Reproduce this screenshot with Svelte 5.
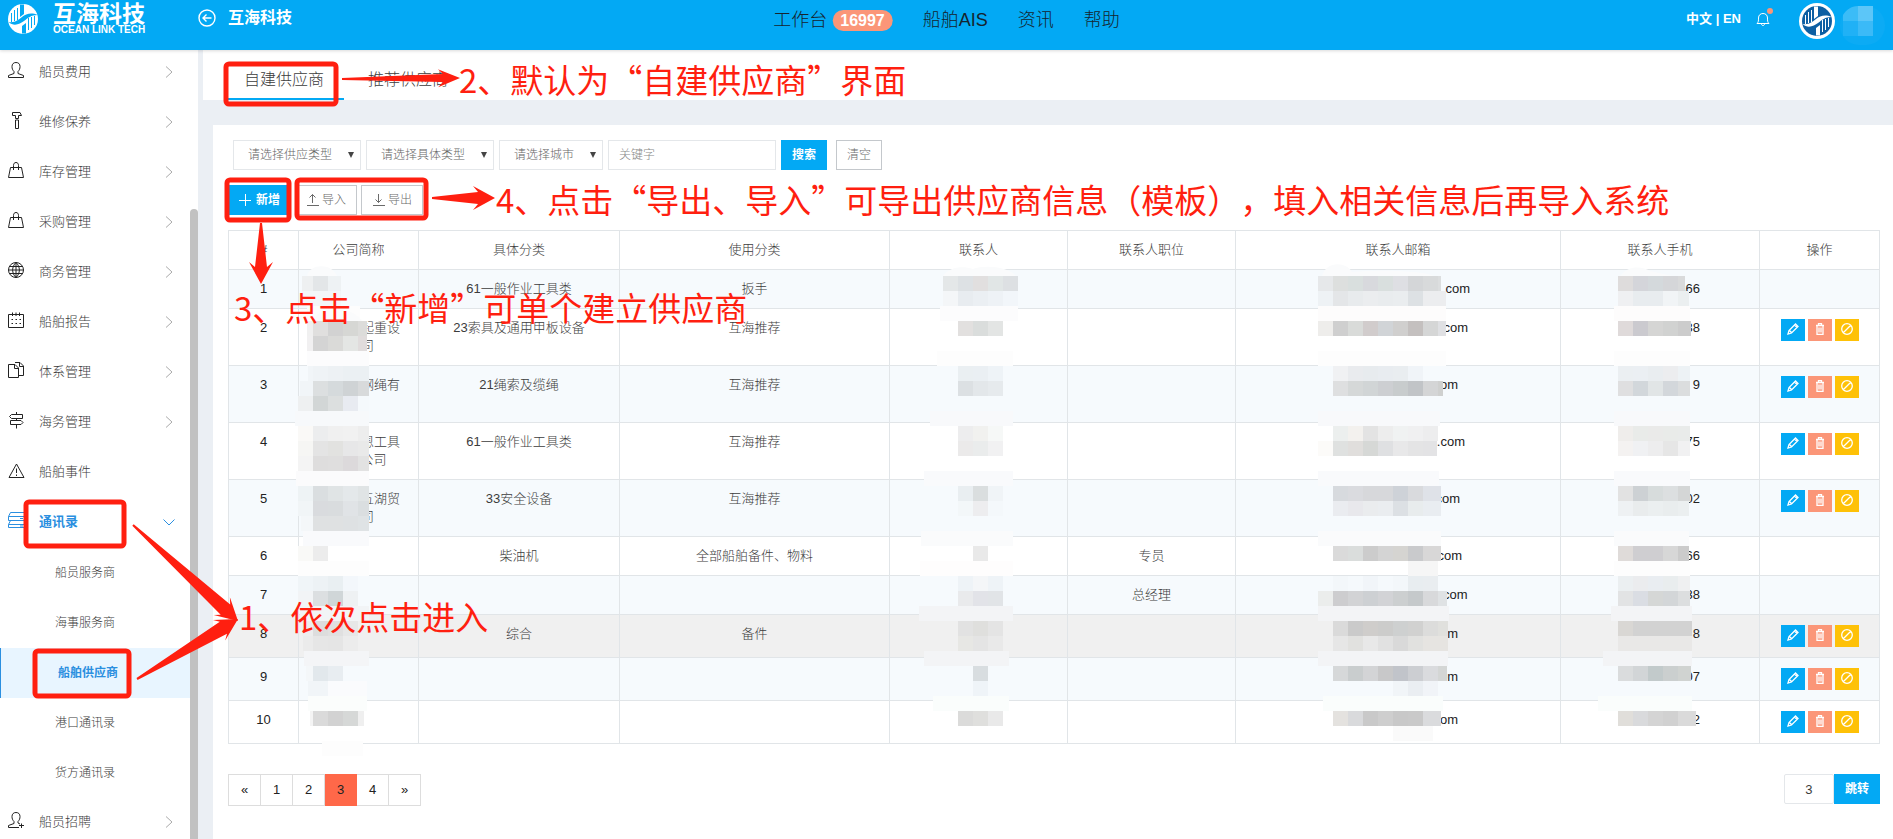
<script lang="ts">
	type MenuItem = { label: string; icon: string; open?: boolean; leaf?: boolean };

	const menu: MenuItem[] = [
		{ label: '船员费用', icon: 'user' },
		{ label: '维修保养', icon: 'hammer' },
		{ label: '库存管理', icon: 'bag' },
		{ label: '采购管理', icon: 'bag' },
		{ label: '商务管理', icon: 'globe' },
		{ label: '船舶报告', icon: 'calendar' },
		{ label: '体系管理', icon: 'files' },
		{ label: '海务管理', icon: 'signpost' },
		{ label: '船舶事件', icon: 'alert', leaf: true },
		{ label: '通讯录', icon: 'server', open: true },
		{ label: '船员招聘', icon: 'userAdd' }
	];
	const contacts = ['船员服务商', '海事服务商', '船舶供应商', '港口通讯录', '货方通讯录'];
	let activeContact = $state('船舶供应商');

	const icons: Record<string, string> = {
		user: 'M.5 15.5V13.5L6 11.5V9.5C4.5 8 4 6.500 4 4.500C4 2 5.500.5 8 .5S12 2 12 4.500C12 6.500 11.500 8 10 9.500V11.500L15.500 13.500V15.500Z',
		userAdd: 'M11 15.500H.5V13.500L6 11.500V9.500C4.500 8 4 6.500 4 4.500C4 2 5.500.5 8 .5S12 2 12 4.500C12 6.500 11.500 8 10 9.500V11L12 12M13.500 11.500V16M11 13.500H16',
		hammer: 'M4.500.5H12L13.500 3.500H10.500V6.500H7.500V3.500H4.500ZM7.500 8H10.500V16.500H7.500Z',
		bag: 'M2.500 5.500H13.500L15.500 15.500H.5ZM5.500 8V3.500C5.500 1.500 6.500.5 8 .5S10.500 1.500 10.500 3.500V8',
		globe: 'M8 .5A7.500 7.500 0 1 0 8 15.500A7.500 7.500 0 1 0 8 .5ZM8 .5C3.500 5 3.500 11 8 15.500C12.500 11 12.500 5 8 .5M8 .5V15.500M.5 8H15.500M1.500 4.500H14.500M1.500 11.500H14.500',
		calendar: 'M.5 2.500H15.500V15.500H.5ZM4.500.5V4M8 .5V4M11.500.5V4M3.500 7.500H5M7.500 7.500H9M11.500 7.500H13M3.500 11.500H5M7.500 11.500H9M11.500 11.500H13',
		files: 'M.5 2.500H7L10.500 6V15.500H.5ZM6.500 2.500V6.500H10.500M7 .5H12L15.500 4V13.500H11M11.500.5V4.500H15.500',
		signpost: 'M8.500 0V2M8.500 6.500V8.500M8.500 13V16.500M3.500 2.500H14.500V6.500H3.500L1.500 4.500ZM2.500 8.500H13L15 10.500L13 12.500H2.500Z',
		alert: 'M8.500 2L16 15.500H1ZM8.500 6.500V11M8.500 12.500V14',
		server: 'M2.500.5H16M2.500.5L.5 4.500V8.500H16M.5 4.500H16M2.500 8.500L.5 12.500V15.500H16M.5 12.500H16M12 6.500H15M12 14H15'
	};

	const topNav = [
		{ label: '工作台', badge: '16997' },
		{ label: '船舶AIS' },
		{ label: '资讯' },
		{ label: '帮助' }
	];

	const tabs = ['自建供应商', '推荐供应商'];
	let activeTab = $state('自建供应商');

	const filters = [
		{ id: 'supply-type', label: '请选择供应类型', size: 'wide' },
		{ id: 'detail-type', label: '请选择具体类型', size: 'wide' },
		{ id: 'city', label: '请选择城市', size: 'narrow' }
	];
	let keyword = $state('');

	const columns = [
		{ label: '#', weight: 70 },
		{ label: '公司简称', weight: 120 },
		{ label: '具体分类', weight: 201 },
		{ label: '使用分类', weight: 270 },
		{ label: '联系人', weight: 178 },
		{ label: '联系人职位', weight: 168 },
		{ label: '联系人邮箱', weight: 325 },
		{ label: '联系人手机', weight: 199 },
		{ label: '操作', weight: 120 }
	];
	const totalWeight = columns.reduce((sum, c) => sum + c.weight, 0);

	// Only the tail of each redacted value is kept, `w` is the width of the whole value.
	type Masked = { text: string; w: number };
	type Supplier = {
		company: Masked[];
		category: string;
		usage: string;
		title?: string;
		email: Masked;
		phone: string;
		editable: boolean;
	};

	const suppliers: Supplier[] = [
		{ company: [], category: '61一般作业工具类', usage: '扳手', email: { text: '.com', w: 144 }, phone: '866', editable: false },
		{ company: [{ text: '起重设', w: 83 }, { text: '司', w: 31 }], category: '23索具及通用甲板设备', usage: '互海推荐', email: { text: '.com', w: 140 }, phone: '38', editable: true },
		{ company: [{ text: '钢绳有', w: 83 }, { text: '', w: 31 }], category: '21绳索及缆绳', usage: '互海推荐', email: { text: 'om', w: 120 }, phone: '9', editable: true },
		{ company: [{ text: '恩工具', w: 83 }, { text: '公司', w: 56 }], category: '61一般作业工具类', usage: '互海推荐', email: { text: '.com', w: 134 }, phone: '75', editable: true },
		{ company: [{ text: '五湖贸', w: 83 }, { text: '司', w: 31 }], category: '33安全设备', usage: '互海推荐', email: { text: 'com', w: 124 }, phone: '02', editable: true },
		{ company: [], category: '柴油机', usage: '全部船舶备件、物料', title: '专员', email: { text: 'com', w: 128 }, phone: '66', editable: false },
		{ company: [], category: '', usage: '', title: '总经理', email: { text: 'com', w: 139 }, phone: '38', editable: false },
		{ company: [], category: '综合', usage: '备件', email: { text: 'm', w: 120 }, phone: '8', editable: true },
		{ company: [], category: '', usage: '', email: { text: 'om', w: 120 }, phone: '07', editable: true },
		{ company: [], category: '', usage: '', email: { text: 'om', w: 120 }, phone: '2', editable: true }
	];
	const hoveredRow = 7;

	const pages = ['«', '1', '2', '3', '4', '»'];
	let page = $state('3');
	let jumpTo = $state('3');

	// --- Redaction mosaic ------------------------------------------------------
	// Each strip: y, left, right, one colour per tile; the last colour fills the rest.
	type Strip = [number, number, number, string];
	const TILE = 15;
	const TILE_OFFSET = 13;

	const strips: Strip[] = [
		// company
		[276, 302, 341, 'eef0f1 e3e6e8 eef2f4'],
		[291, 302, 341, 'f3f6f8'],
		[306, 307, 360, 'fdfdfd'],
		[321, 307, 367, 'f0f0f0 e0dfde d2d2d2 d6d7d4 dcdcda'],
		[336, 307, 367, 'f1f0f1 d4d4d4 dadad8 e4e6e4 e0dcdc'],
		[351, 307, 369, 'fcfcfd'],
		[366, 308, 369, 'f1f5f8 eff3f6 edf1f4 ebf0f3'],
		[381, 300, 369, 'f1f5f8 dcdfe0 d5dadc cfd3d5 d8dadb'],
		[396, 298, 369, 'eef0f1 d2d6d6 dcdfdf e8ebf1 f5f9fc'],
		[411, 295, 369, 'f7f9fb'],
		[426, 298, 369, 'faf9f7 ecedee f0f0f0 f1f1f1 ededed'],
		[441, 298, 369, 'f6f6f4 e4e4e4 e2e2e0 e7e7e8 e9e9e9'],
		[456, 298, 369, 'f4f4f4 dedddd dfdede dcd9db e2e2e2'],
		[471, 296, 369, 'fbfbfc'],
		[486, 298, 369, 'eef3f5 dadee0 e0e4e5 e4e8ea e0e4e5'],
		[501, 298, 369, 'f1f5f7 d9dbde d9dcde e0e3e6 dadee0'],
		[516, 301, 369, 'f4f7f9 dfe1e2 dfe1e2 dee1e3 dfe3e5'],
		[531, 303, 369, 'f9fafc'],
		[546, 298, 328, 'f9f9f7 ececec'],
		[561, 298, 369, 'fdfdfd'],
		[576, 298, 358, 'f0f5f8 edf2f5 e9eff2 f3f7fb'],
		[591, 298, 358, 'f2f4f6 dcdfe1 d0d6d8 eef1f3'],
		[606, 300, 369, 'f2f4f6'],
		[621, 302, 358, 'ededed dddddd e0e0e0 e7e7e7'],
		[636, 303, 358, 'ebebeb e6e6e6 e5e5e5 ececec'],
		[651, 304, 369, 'f4f5f7'],
		[666, 306, 343, 'f4f7f9 e2e8ec e8edf1'],
		[681, 308, 367, 'f1f5f8 f1f5f8 fafbfd'],
		[696, 308, 367, 'fbfdfc'],
		[711, 310, 364, 'f4f4f4 dadada d2d2d2 d6d8d7 efefef'],
		[741, 322, 363, 'fdfdfd'],
		// contact
		[276, 943, 1018, 'e4e7e8 dde1e4 e1dfdf e1e6e6 dde0e3'],
		[291, 943, 1018, 'f4f6f8 e8ecf0 ebeff3 eef2f6 f2f6fa'],
		[306, 940, 1018, 'fcfcfd'],
		[321, 958, 1003, 'e2e0df dadddc e3e5e4'],
		[351, 937, 1013, 'fdfdfd'],
		[366, 958, 1003, 'eaeff2 eaeff3 eef3f7'],
		[381, 958, 1003, 'dce0e3 e3e7ea e6eaed'],
		[411, 930, 1013, 'f8f9fb'],
		[426, 958, 1003, 'ededee f1f1ef f6f8f7'],
		[441, 958, 1003, 'ebeaea eaecec f1f1f2'],
		[471, 924, 1013, 'f9fafc'],
		[486, 958, 1003, 'e9eef1 dadedf f0f4f7'],
		[501, 958, 1003, 'f3f7f9 ededef f4f8fb'],
		[531, 921, 1013, 'fafbfc'],
		[546, 973, 988, 'e9e9e9'],
		[561, 920, 1013, 'fefdfd'],
		[576, 958, 1003, 'eef3f7 f4f6f8 eef3f7'],
		[591, 958, 1003, 'e9eaec e2e3e8 e1e4e7'],
		[606, 919, 1013, 'f3f4f6'],
		[621, 958, 1003, 'e2e2e2 dfdfdd e4e4e4'],
		[636, 958, 1003, 'e7e7e4 e4e4e4 e9e9e9'],
		[651, 924, 1009, 'f3f4f6'],
		[666, 973, 988, 'd8dde0'],
		[681, 973, 988, 'eff4f8'],
		[696, 933, 1009, 'fafdfc'],
		[711, 958, 1003, 'dbdbda dfdfdd e9e9e9'],
		// email
		[276, 1318, 1441, 'e6e8ea dddfde d9dfde d8d9dd d9dfde dedfe3 d4d6d8 d8dadb dcdedf'],
		[291, 1318, 1446, 'eef2f5 e4e6e8 e8ebed ebedef e9ecee eaedef dde1e4 ecedef'],
		[306, 1318, 1446, 'fdfcfc'],
		[321, 1318, 1446, 'eeedeb cfcfcf d9dbd9 d1cccc d1d4d7 d0cfce c4c0bf d5d6d6 dfe0e3'],
		[351, 1318, 1446, 'fdfdfd'],
		[366, 1333, 1423, 'f0f1f3 e9ebee e7ebee e8ecf0 e9edf0 f0f4f8'],
		[381, 1333, 1443, 'dedfe0 d5d8d8 d1d5d6 cdcfd2 c8cccd c1c4c7 d4d5d6 cfd0cf'],
		[411, 1318, 1440, 'f8f9fb'],
		[426, 1333, 1438, 'ecefee f3f1ee e3e3e3 ededed f0f2f2 f0f0f1 ededee'],
		[441, 1318, 1437, 'fcfbf9 dfe1e0 e0dedc d6d8d6 dfe0e2 e8e8e9 e4e4e5 e3e3e5'],
		[471, 1318, 1439, 'f9fafc'],
		[486, 1333, 1441, 'd7dade dadbdf d7d8db d7d8db ced2d8 d9dadd dfe2e8'],
		[501, 1333, 1441, 'eaecf0 e8e8ec eaecee eaedf0 dce0e4 e8eced e9edf1'],
		[531, 1318, 1441, 'fafbfc'],
		[546, 1333, 1441, 'dadada dadddc cccccc d4d4d4 d5d4d1 c9cacc d8d7d7'],
		[561, 1408, 1438, 'f6f6f6'],
		[576, 1333, 1438, 'f3f7fa f5f9fc f1f5f9 f5f9fc f3f7fa e8edf0 e9edf0'],
		[591, 1318, 1447, 'ebedec cdcdcf d2d3d5 cdd0d3 d2d3d6 cccfd0 c5c9cb d8d9db dfe2e4'],
		[606, 1318, 1449, 'f3f4f6'],
		[621, 1333, 1448, 'dadada cacaca cfcdcb cccccb ced0d0 d1d1d0 dcdcdb e0e0dd'],
		[636, 1333, 1448, 'e6e6e6 e1e1df e8e8e8 e1e1e1 d9d9d9 e1e1df e6e4e1'],
		[651, 1318, 1448, 'f3f4f6'],
		[666, 1333, 1447, 'd6d8d9 c9cdce d3d4d6 c8c8c9 c1c4ca ccced2 dadbde d4d6d5'],
		[681, 1393, 1438, 'f1f5f8 eaeef2 f1f4f8'],
		[696, 1323, 1443, 'fafdfc'],
		[711, 1333, 1441, 'e4e2df d9dadc c9c9c9 cecece c8c8c8 c9c9c9 dadbdd'],
		[726, 1393, 1433, 'fafafa'],
		// phone
		[276, 1618, 1685, 'dedcdc d4d5da d4d9dc d5d6d9 d9dadb'],
		[291, 1618, 1689, 'eff0f2 e8ecef e8ecef f1f4f6 ebeff0'],
		[306, 1614, 1690, 'fdfcfc'],
		[321, 1618, 1691, 'dfdada cbcacf d5d5d4 d1d2d1 cccccc'],
		[351, 1614, 1690, 'fdfdfd'],
		[366, 1618, 1690, 'ebeff2 ebeff3 e9edf0 ecedef edf2f5'],
		[381, 1618, 1690, 'dfdfe0 d2d7db e1e5e6 d3d7db dbddde'],
		[411, 1614, 1690, 'f8f9fb'],
		[426, 1618, 1690, 'efedeb e9ebe9 eaeae9 e9ebe9 e9ebea'],
		[441, 1618, 1690, 'f4f2f1 f0f1f3 ededee e6e6e6 f1f1f2'],
		[471, 1614, 1690, 'f9fafc'],
		[486, 1618, 1690, 'e2e2e2 cdd1d4 d7dcdc dcdfe0 d4d6d6'],
		[501, 1618, 1689, 'eef1f3 e9eced ebeff0 e9edee ebeff0'],
		[531, 1614, 1689, 'fafbfc'],
		[546, 1618, 1689, 'dfdbd9 cfced1 cfced1 d7d7d7 cbcbcb'],
		[561, 1614, 1690, 'fdfdfd'],
		[576, 1618, 1690, 'ebeff1 ebecee e9edf1 e9edee eff0f1'],
		[591, 1618, 1690, 'e2e3e4 dadde3 d5d7d6 d3d6d8 dcdedf'],
		[606, 1611, 1692, 'f3f4f6'],
		[621, 1618, 1692, 'd9d7d4 d2d2d2'],
		[636, 1618, 1692, 'e9e8e7'],
		[651, 1603, 1692, 'f3f4f6'],
		[666, 1618, 1691, 'dadcdd d2d5d7 c2cacb cbcfcf d0d3d1'],
		[696, 1598, 1692, 'fafdfc'],
		[711, 1618, 1696, 'e0deda d9dadc d4d4d4 d1d1d1 dadada']
	];

	const tiles = strips.flatMap(([y, left, right, list]) => {
		const colors = list.split(' ');
		const out: { x: number; y: number; w: number; fill: string }[] = [];
		let x = left;
		for (let i = 0; x < right; i++) {
			const edge = (Math.floor((x - TILE_OFFSET) / TILE) + 1) * TILE + TILE_OFFSET;
			const next = Math.min(edge, right);
			out.push({ x, y, w: next - x, fill: '#' + colors[Math.min(i, colors.length - 1)] });
			x = next;
		}
		return out;
	});

	// --- Guide marks -----------------------------------------------------------
	const boxes = [
		{ x: 226, y: 64, w: 110, h: 40 },
		{ x: 227, y: 180, w: 62, h: 40 },
		{ x: 297, y: 180, w: 129, h: 38 },
		{ x: 26, y: 502, w: 98, h: 44 },
		{ x: 35, y: 651, w: 94, h: 45 }
	];

	function arrow(x1: number, y1: number, x2: number, y2: number, half = 11, body = 5): string {
		const len = Math.hypot(x2 - x1, y2 - y1);
		const ux = (x2 - x1) / len;
		const uy = (y2 - y1) / len;
		const at = (back: number, side: number) =>
			`${(x2 - ux * back - uy * side).toFixed(1)},${(y2 - uy * back + ux * side).toFixed(1)}`;
		return [at(len, 1), at(17, body), at(22, half), at(0, 0), at(22, -half), at(17, -body), at(len, -1)].join(' ');
	}

	const arrows = [
		arrow(342, 79, 460, 78, 9, 4),
		arrow(261, 223, 261, 284, 12, 6),
		arrow(432, 198, 495, 198, 12, 6),
		arrow(133, 525, 238, 621, 12, 7),
		arrow(137, 679, 238, 619, 12, 7)
	];

	const notes = [
		{ x: 459, y: 55, text: '2、默认为“自建供应商”界面' },
		{ x: 496, y: 175, text: '4、点击“导出、导入”可导出供应商信息（模板），填入相关信息后再导入系统' },
		{ x: 234, y: 283, text: '3、点击“新增”可单个建立供应商' },
		{ x: 239, y: 592, text: '1、依次点击进入' }
	];
</script>

{#snippet emblem(ink: string, paper: string)}
	<circle cx="16" cy="16" r="15" fill={ink} />
	<path stroke={paper} fill="none" d="M4.500 10V19M7.500 7V18M10.500 5V17M21.500 15V27M24.500 14V25M27.500 13V22" />
	<path fill={paper} d="M13 1.500H17V11L13 14ZM15 30.500H19V20L15 23Z" />
	<path fill={paper} d="M1.500 19C8 20 11 17 15 14S24 9 30.500 12C24 12 21 15 17 18S7 24 1.500 19Z" />
{/snippet}

<div class="page">
	<header class="topbar">
		<a class="brand" href="#home" aria-label="互海科技">
			<svg width="30" height="30" viewBox="1 1 30 30" aria-hidden="true">{@render emblem('#fff', '#03a9f4')}</svg>
			<span class="brand-text">
				<strong>互海科技</strong>
				<small>OCEAN LINK TECH</small>
			</span>
		</a>
		<a class="back" href="#back">
			<svg width="18" height="18" viewBox="0 0 18 18" fill="none" stroke="#fff" aria-hidden="true">
				<circle cx="9" cy="9" r="8" stroke-width="1.4" />
				<path d="M13.500 9H5M8.500 5.500L5 9L8.500 12.500" stroke-width="1.4" />
			</svg>
			<span>互海科技</span>
		</a>
		<nav class="topnav">
			{#each topNav as item (item.label)}
				<a href="#{item.label}">{item.label}{#if item.badge}<span class="badge">{item.badge}</span>{/if}</a>
			{/each}
		</nav>
		<div class="account">
			<button type="button" class="lang">中文 | EN</button>
			<button type="button" class="bell" aria-label="通知">
				<svg width="14" height="15" viewBox="0 0 14 15" fill="none" stroke="#fff" aria-hidden="true">
					<path d="M1 11.500H13C11.500 10 11.500 9 11.500 6C11.500 3 9.500 1.500 7 1.500S2.500 3 2.500 6C2.500 9 2.500 10 1 11.500ZM5.500 12C5.500 14 8.500 14 8.500 12" />
				</svg>
				<span class="dot"></span>
			</button>
			<svg class="avatar" width="36" height="36" viewBox="-2 -2 36 36" aria-hidden="true">
				<circle cx="16" cy="16" r="18" fill="#fff" />
				{@render emblem('#0d5fa3', '#fff')}
			</svg>
			<svg class="nick" width="45" height="40" viewBox="0 0 45 40" aria-hidden="true">
				<rect width="45" height="39" rx="19" fill="#0cabf4" />
				<path d="M3 15V9C6 4 11 0 18 0V15Z" fill="#3bbcf7" />
				<path d="M18 0H33V15H18Z" fill="#5cc6f8" />
				<path d="M3 15H18V30H3Z" fill="#20b1f6" />
				<path d="M18 15H33V30H18Z" fill="#3bbaf7" />
			</svg>
		</div>
	</header>

	<div class="body">
		<aside class="sidebar">
			<ul class="menu">
				{#each menu as item (item.label)}
					<li>
						<a class="menu-link" class:open={item.open} href="#{item.label}">
							<svg class="icon" width="17" height="17" viewBox="0 0 17 17" fill="none" stroke="currentColor" aria-hidden="true">
								<path d={icons[item.icon]} />
							</svg>
							<span>{item.label}</span>
							{#if !item.leaf}
								<svg class="chevron" width="12" height="12" viewBox="0 0 12 12" fill="none" stroke="currentColor" aria-hidden="true">
									<path d={item.open ? 'M.5 3.500L6 9L11.500 3.500' : 'M3 .5L9 6L3 11.500'} />
								</svg>
							{/if}
						</a>
						{#if item.open}
							<ul class="submenu">
								{#each contacts as contact (contact)}
									<li>
										<a
											href="#{contact}"
											class:active={contact === activeContact}
											onclick={() => (activeContact = contact)}>{contact}</a
										>
									</li>
								{/each}
							</ul>
						{/if}
					</li>
				{/each}
			</ul>
		</aside>

		<main class="main">
			<div class="tabs" role="tablist">
				{#each tabs as tab (tab)}
					<button
						type="button"
						role="tab"
						class:active={tab === activeTab}
						aria-selected={tab === activeTab}
						onclick={() => (activeTab = tab)}>{tab}</button
					>
				{/each}
			</div>

			<section class="card">
				<form class="filters" onsubmit={(e) => e.preventDefault()}>
					{#each filters as filter (filter.id)}
						<label class="select {filter.size}">
							<select id={filter.id} aria-label={filter.label}>
								<option>{filter.label}</option>
							</select>
						</label>
					{/each}
					<input class="keyword" type="text" placeholder="关键字" aria-label="关键字" bind:value={keyword} />
					<button type="submit" class="btn primary">搜索</button>
					<button type="button" class="btn clear" onclick={() => (keyword = '')}>清空</button>
				</form>

				<div class="actions">
					<button type="button" class="btn primary add">
						<svg width="12" height="12" viewBox="0 0 12 12" stroke="#fff" aria-hidden="true"><path d="M6.500 0V12M0 6.500H12" /></svg>
						新增
					</button>
					<button type="button" class="btn">
						<svg width="14" height="14" viewBox="0 0 14 14" fill="none" stroke="currentColor" aria-hidden="true"><path d="M1 12.500H13M6.500 10V1.500M3.500 4.500L6.500 1.500L9.500 4.500" /></svg>
						导入
					</button>
					<button type="button" class="btn">
						<svg width="14" height="14" viewBox="0 0 14 14" fill="none" stroke="currentColor" aria-hidden="true"><path d="M1 12.500H13M6.500 1V9.500M3.500 6.500L6.500 9.500L9.500 6.500" /></svg>
						导出
					</button>
				</div>

				<table class="grid">
					<colgroup>
						{#each columns as col (col.label)}
							<col style:width="{(col.weight / totalWeight) * 100}%" />
						{/each}
					</colgroup>
					<thead>
						<tr>
							{#each columns as col (col.label)}
								<th scope="col">{col.label}</th>
							{/each}
						</tr>
					</thead>
					<tbody>
						{#each suppliers as row, i (i)}
							<tr class:hovered={i === hoveredRow}>
								<td class="num">{i + 1}</td>
								<td>
									{#each row.company as line}
										<span class="line"><span class="masked" style:width="{line.w}px">{line.text}</span></span>
									{/each}
								</td>
								<td>{row.category}</td>
								<td>{row.usage}</td>
								<td></td>
								<td>{row.title ?? ''}</td>
								<td class="num"><span class="masked" style:width="{row.email.w}px">{row.email.text}</span></td>
								<td class="num"><span class="masked phone">{row.phone}</span></td>
								<td>
									{#if row.editable}
										<div class="ops">
											<button type="button" class="edit" aria-label="编辑">
												<svg width="12" height="12" viewBox="0 0 12 12" fill="none" stroke="#fff" aria-hidden="true">
													<path stroke-width="1.3" d="M1 11L2 7.500L8.500 1L11 3.500L4.500 10L1 11ZM2.500 7.500L4.500 9.500M7.500 2L10 4.500" />
												</svg>
											</button>
											<button type="button" class="delete" aria-label="删除">
												<svg width="12" height="12" viewBox="0 0 12 12" fill="none" stroke="#fff" aria-hidden="true">
													<path stroke-width="1.3" d="M2 2.500H10M4.500 2V.5H7.500V2M3 3V11.500H9V3M5 4.500V9.500M7 4.500V9.500" />
												</svg>
											</button>
											<button type="button" class="disable" aria-label="停用">
												<svg width="12" height="12" viewBox="0 0 12 12" fill="none" stroke="#fff" aria-hidden="true">
													<path stroke-width="1.3" d="M6 .7A5.300 5.300 0 1 0 6 11.300A5.300 5.300 0 1 0 6 .7ZM2.500 9.500L9.500 2.500" />
												</svg>
											</button>
										</div>
									{/if}
								</td>
							</tr>
						{/each}
					</tbody>
				</table>

				<div class="footer">
					<nav class="pager" aria-label="分页">
						{#each pages as p (p)}
							<button type="button" class:current={p === page} onclick={() => (page = p)}>{p}</button>
						{/each}
					</nav>
					<form class="jump" onsubmit={(e) => e.preventDefault()}>
						<input type="text" aria-label="页码" bind:value={jumpTo} />
						<button type="submit" class="btn primary">跳转</button>
					</form>
				</div>
			</section>
		</main>
	</div>

	<svg class="overlay" aria-hidden="true">
		<g shape-rendering="crispEdges">
			{#each tiles as t}
				<rect x={t.x} y={t.y} width={t.w} height="15" fill={t.fill} />
			{/each}
		</g>
		<g fill="#fafbfc">
			<path d="M307 276C310 263 332 263 337 276ZM943 276C950 266 964 266 973 269C983 265 1008 266 1016 276Z" />
			<path d="M1322 276C1326 261 1346 261 1352 272C1376 270 1420 270 1434 276ZM1620 276C1628 265 1642 266 1650 271L1672 276Z" />
			<path d="M313 321C318 306 350 304 362 321Z" />
		</g>
		<g fill="none" stroke="#ff1f10" stroke-width="5">
			{#each boxes as b}
				<rect x={b.x} y={b.y} width={b.w} height={b.h} rx="3" />
			{/each}
		</g>
		<g fill="#ff1f10">
			{#each arrows as points}
				<polygon {points} />
			{/each}
		</g>
	</svg>
	{#each notes as note (note.text)}
		<p class="note" style:left="{note.x}px" style:top="{note.y}px">{note.text}</p>
	{/each}
</div>

<style>
	:global(body) {
		margin: 0;
		background: #ebeff4;
	}

	.page {
		position: relative;
		display: flex;
		flex-direction: column;
		height: 100vh;
		overflow: hidden;
		font-family: 'Liberation Sans', 'Noto Sans CJK SC', sans-serif;
		font-size: 13px;
		font-weight: 300;
		line-height: 18px;
		color: #3c3c3c;
	}

	.page * {
		box-sizing: border-box;
	}

	a {
		color: inherit;
		text-decoration: none;
	}

	button,
	input,
	select {
		font: inherit;
		color: inherit;
		margin: 0;
		outline: none;
	}

	button {
		padding: 0;
		border: 0;
		background: none;
		cursor: pointer;
	}

	ul {
		list-style: none;
		margin: 0;
		padding: 0;
	}

	.topbar {
		position: relative;
		z-index: 1;
		display: flex;
		flex: none;
		height: 50px;
		padding: 0 8px;
		background: #03a9f4;
		box-shadow: 0 1px 3px rgba(0, 0, 0, 0.15);
		color: #fff;
	}

	.brand {
		display: flex;
		gap: 15px;
		width: 190px;
		padding-top: 4px;
	}

	.brand-text {
		display: flex;
		flex-direction: column;
	}

	.brand strong {
		font-size: 23px;
		font-weight: 700;
		line-height: 20px;
	}

	.brand small {
		font-size: 10px;
		font-weight: 700;
		line-height: 12px;
	}

	.back {
		display: flex;
		align-items: center;
		gap: 12px;
		height: 36px;
		font-size: 16px;
		font-weight: 700;
	}

	.topnav {
		position: absolute;
		left: 50%;
		display: flex;
		gap: 30px;
		height: 40px;
		align-items: center;
		transform: translateX(-50%);
		font-size: 18px;
		color: #16242e;
		white-space: nowrap;
	}

	.topnav a {
		display: flex;
		align-items: center;
		gap: 5px;
	}

	.badge {
		padding: 0 8px;
		border-radius: 11px;
		background: #fb9678;
		color: #fff;
		font-size: 16px;
		font-weight: 700;
		line-height: 21px;
	}

	.account {
		display: flex;
		margin-left: auto;
		color: #fff;
	}

	.lang {
		height: 38px;
		font-size: 13px;
		font-weight: 700;
	}

	.bell {
		position: relative;
		width: 14px;
		height: 38px;
		margin: 0 29px 0 15px;
	}

	.bell svg {
		display: block;
		margin: 0 auto;
	}

	.dot {
		position: absolute;
		top: 8px;
		right: -3px;
		width: 6px;
		height: 6px;
		border-radius: 50%;
		background: #fb9678;
	}

	.avatar {
		margin: 3px 5px 0 0;
	}

	.nick {
		margin-top: 6px;
	}

	.body {
		display: flex;
		flex: 1;
		min-height: 0;
	}

	.sidebar {
		position: relative;
		flex: none;
		width: 198px;
		background: #fff;
	}

	/* scroll thumb */
	.sidebar::after {
		content: '';
		position: absolute;
		top: 159px;
		right: 0;
		bottom: 0;
		width: 8px;
		border-radius: 4px 4px 0 0;
		background: #c1c1c1;
	}

	.menu {
		margin: -2px 8px 0 0;
	}

	.menu-link {
		display: flex;
		align-items: center;
		gap: 14px;
		height: 50px;
		padding: 0 15px 2px 8px;
	}

	.icon {
		margin-bottom: 4px;
		color: #222;
	}

	.menu-link .chevron {
		margin-left: auto;
		color: #aaa;
	}

	.menu-link.open,
	.menu-link.open .icon,
	.menu-link.open .chevron {
		color: #2b8fe0;
		font-weight: 700;
	}

	.submenu a {
		display: block;
		height: 50px;
		padding-left: 55px;
		font-size: 12px;
		line-height: 50px;
	}

	.submenu a.active {
		border-left: 1px solid #2b8fe0;
		padding-left: 57px;
		background: #e8f5ff;
		color: #2b8fe0;
		font-weight: 700;
	}

	.main {
		display: flex;
		flex-direction: column;
		flex: 1;
		min-width: 0;
		margin-left: 5px;
	}

	.tabs {
		display: flex;
		gap: 4px;
		height: 50px;
		padding-left: 21px;
		background: #fff;
	}

	.tabs button {
		padding: 12px 20px 0;
		border-bottom: 2px solid transparent;
		font-size: 16px;
	}

	.tabs button.active {
		border-bottom-color: #03a9f4;
	}

	.card {
		flex: 1;
		margin: 25px 0 0 10px;
		padding: 15px 13px 0 15px;
		background: #fff;
	}

	.filters {
		display: flex;
		gap: 5px;
		padding-left: 5px;
		font-size: 12px;
		color: #666;
	}

	.select {
		position: relative;
	}

	.select::after {
		content: '';
		position: absolute;
		top: 12px;
		right: 7px;
		border: 3px solid transparent;
		border-top: 6px solid #444;
		border-bottom: 0;
	}

	.select.wide {
		width: 128px;
	}

	.select.narrow {
		width: 104px;
	}

	.select select {
		width: 100%;
		height: 30px;
		padding: 0 14px;
		border: 1px solid #e4e7ea;
		border-radius: 0;
		background: #fff;
		appearance: none;
	}

	.keyword {
		width: 168px;
		height: 30px;
		padding: 0 10px;
		border: 1px solid #e4e7ea;
	}

	.keyword::placeholder {
		color: #888;
	}

	.btn {
		display: flex;
		align-items: center;
		justify-content: center;
		gap: 2px;
		height: 30px;
		padding: 0 10px;
		border: 1px solid #c4c8cc;
		background: #fff;
		color: #6a6a6a;
		font-size: 12px;
	}

	.btn.primary {
		border-color: #03a9f4;
		background: #03a9f4;
		color: #fff;
		font-weight: 700;
	}

	.btn.clear {
		margin-left: 4px;
	}

	.btn.add {
		gap: 5px;
		width: 63px;
	}

	.actions {
		display: flex;
		gap: 4px;
		margin: 15px 0;
	}

	.grid {
		width: 100%;
		table-layout: fixed;
		border-collapse: collapse;
	}

	.grid th,
	.grid td {
		padding: 10px 0;
		border: 1px solid #e1e5e8;
		text-align: center;
		vertical-align: top;
		font-weight: 300;
	}

	.grid tbody tr:nth-child(odd) {
		background: #f6fafd;
	}

	.grid tbody tr.hovered {
		background: #f0f0f0;
	}

	.grid .num {
		color: #222;
	}

	.line {
		display: block;
		height: 18px;
	}

	.masked {
		display: inline-block;
		text-align: right;
	}

	.masked.phone {
		width: 80px;
	}

	.ops {
		display: flex;
		justify-content: center;
		gap: 3px;
	}

	.ops button {
		display: flex;
		align-items: center;
		justify-content: center;
		width: 24px;
		height: 22px;
		padding-bottom: 2px;
	}

	.edit {
		background: #03a9f4;
	}

	.delete {
		background: #fb9678;
	}

	.disable {
		background: #fec107;
	}

	.footer {
		display: flex;
		justify-content: space-between;
		margin-top: 30px;
	}

	.pager {
		display: flex;
		border-left: 1px solid #ddd;
	}

	.pager button {
		width: 32px;
		height: 32px;
		border: 1px solid #ddd;
		border-left: 0;
		color: #222;
	}

	.pager button.current {
		border-color: #ff6849;
		background: #ff6849;
	}

	.jump {
		display: flex;
	}

	.jump input {
		width: 50px;
		height: 30px;
		border: 1px solid #e4e7ea;
		border-radius: 2px;
		text-align: center;
	}

	.overlay {
		position: absolute;
		inset: 0;
		z-index: 2;
		width: 100%;
		height: 100%;
		pointer-events: none;
	}

	.note {
		position: absolute;
		z-index: 3;
		margin: 0;
		font-family: 'Noto Sans CJK SC', sans-serif;
		font-size: 33px;
		font-weight: 400;
		line-height: 48px;
		color: #ff1f10;
		white-space: nowrap;
		text-spacing-trim: space-all;
		pointer-events: none;
	}
</style>
